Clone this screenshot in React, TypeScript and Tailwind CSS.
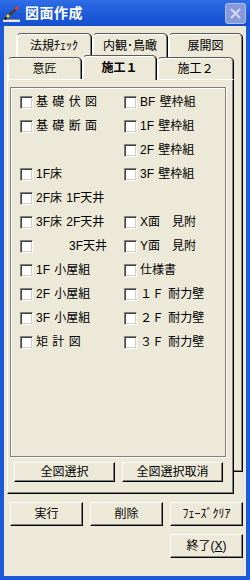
import React from "react";

const FONT = "font-['Liberation_Sans','Noto_Sans_CJK_JP',sans-serif]";

function Check({ label, indent }: { label?: string; indent?: boolean }) {
  if (!label) return <div className="h-[24px]" />;
  return (
    <div className="flex items-center h-[24px]">
      <span className="w-[13px] h-[13px] shrink-0 bg-white border border-t-[#808080] border-l-[#808080] border-b-white border-r-white shadow-[inset_1px_1px_0_#404040,inset_-1px_-1px_0_#d4d0c8]" />
      <span className={`text-[12px] leading-none text-black whitespace-pre [word-spacing:1px] ${indent ? "ml-[36px]" : "ml-[3px]"}`}>{label}</span>
    </div>
  );
}

function Btn({ children, w, h }: { children: React.ReactNode; w: string; h: string }) {
  return (
    <div className={`${w} ${h} flex items-center justify-center bg-[#ece9d8] border border-t-white border-l-white border-r-black border-b-black shadow-[inset_-1px_-1px_0_#808080] text-[12px] leading-none text-black`}>
      {children}
    </div>
  );
}

function BackTab({ label, w }: { label: string; w: string }) {
  return (
    <div className={`${w} h-full flex items-center justify-center rounded-t-[5px] border-t border-l border-r border-t-[#5a5a5a] border-l-white border-r-black shadow-[inset_1px_1px_0_#fff,inset_-1px_0_0_#808080] text-[12px] leading-none`}>
      {label}
    </div>
  );
}

function FrontTab({ label, w, sel }: { label: string; w: string; sel?: boolean }) {
  return (
    <div
      className={`${w} flex items-center justify-center rounded-t-[5px] border-t border-l border-r border-t-[#5a5a5a] border-l-white border-r-black shadow-[inset_1px_1px_0_#fff,inset_-1px_0_0_#808080] text-[12px] leading-none bg-[#ece9d8] ${
        sel ? "h-[25px] -mb-[1px] relative z-10 font-bold" : "h-[22px]"
      }`}
    >
      {label}
    </div>
  );
}

export default function App() {
  return (
    <div className={`w-[250px] h-[580px] bg-[#1d5ad8] flex flex-col ${FONT}`}>
      {/* title bar */}
      <div className="h-[26px] flex items-center bg-gradient-to-b from-[#2f6ee6] via-[#1d5bd9] to-[#1550cf]">
        <svg width="17" height="17" viewBox="0 0 17 17" className="ml-[3px] mt-[2px]">
          <rect x="0" y="13" width="17" height="1" fill="#8a8a8a" />
          <rect x="0" y="14" width="17" height="2" fill="#e8e8e8" />
          <line x1="3" y1="12" x2="14" y2="2" stroke="#404040" strokeWidth="3" />
          <line x1="12.5" y1="3.5" x2="15" y2="1" stroke="#e03a3a" strokeWidth="3" />
          <line x1="4" y1="11" x2="6" y2="9" stroke="#f2c94c" strokeWidth="3" />
          <line x1="1.5" y1="13.5" x2="3" y2="12" stroke="#111" strokeWidth="2" />
        </svg>
        <span className="ml-[5px] text-white font-bold text-[14px] leading-none tracking-[0.5px]">図面作成</span>
        <div className="ml-auto mr-[4px] w-[21px] h-[21px] rounded-[3px] bg-[#8799dd] border border-[#b3c0ee] flex items-center justify-center">
          <svg width="13" height="13" viewBox="0 0 13 13">
            <path d="M2 2 L11 11 M11 2 L2 11" stroke="#d6dcf4" strokeWidth="2" />
          </svg>
        </div>
      </div>

      {/* client area */}
      <div className="flex-1 mx-[4px] mb-[4px] bg-[#ece9d8] flex flex-col">
        {/* tab control: two stacked layers */}
        <div className="grid">
          {/* back layer */}
          <div className="col-start-1 row-start-1 ml-[12px] mt-[7px] w-[227px] flex flex-col">
            <div className="h-[24px] flex">
              <BackTab label="法規ﾁｪｯｸ" w="w-[76px]" />
              <BackTab label="内観･鳥瞰" w="w-[76px]" />
              <BackTab label="展開図" w="w-[75px]" />
            </div>
            <div className="h-[415px] border-r border-b border-black shadow-[inset_-1px_-1px_0_#808080]" />
          </div>

          {/* front layer */}
          <div className="col-start-1 row-start-1 ml-[3px] mt-[31px] w-[227px] flex flex-col">
            <div className="h-[22px] flex items-end">
              <FrontTab label="意匠" w="w-[75px]" />
              <FrontTab label="施工１" w="w-[75px]" sel />
              <FrontTab label="施工２" w="w-[77px]" />
            </div>
            <div className="h-[415px] bg-[#ece9d8] border border-t-white border-l-white border-r-black border-b-black shadow-[inset_-1px_-1px_0_#808080] flex flex-col">
              {/* etched frame */}
              <div className="ml-[2px] mt-[7px] w-[216px] h-[370px] border border-[#808080] shadow-[inset_1px_1px_0_#fff,1px_1px_0_#fff] pt-[2px] pl-[9px]">
                <div className="grid grid-cols-[104px_1fr]">
                  <Check label="基 礎 伏 図" />
                  <Check label="BF 壁枠組" />
                  <Check label="基 礎 断 面" />
                  <Check label="1F 壁枠組" />
                  <Check />
                  <Check label="2F 壁枠組" />
                  <Check label="1F床" />
                  <Check label="3F 壁枠組" />
                  <Check label="2F床 1F天井" />
                  <Check />
                  <Check label="3F床 2F天井" />
                  <Check label="X面　見附" />
                  <Check label="3F天井" indent />
                  <Check label="Y面　見附" />
                  <Check label="1F 小屋組" />
                  <Check label="仕様書" />
                  <Check label="2F 小屋組" />
                  <Check label="１Ｆ 耐力壁" />
                  <Check label="3F 小屋組" />
                  <Check label="２Ｆ 耐力壁" />
                  <Check label="矩 計 図" />
                  <Check label="３Ｆ 耐力壁" />
                </div>
              </div>
              <div className="mt-[5px] ml-[6px] flex gap-[7px]">
                <Btn w="w-[101px]" h="h-[20px]">全図選択</Btn>
                <Btn w="w-[101px]" h="h-[20px]">全図選択取消</Btn>
              </div>
            </div>
          </div>
        </div>

        {/* bottom buttons */}
        <div className="mt-[8px] ml-[6px] flex gap-[7px]">
          <Btn w="w-[73px]" h="h-[24px]">実行</Btn>
          <Btn w="w-[73px]" h="h-[24px]">削除</Btn>
          <Btn w="w-[73px]" h="h-[24px]">ﾌｪｰｽﾞｸﾘｱ</Btn>
        </div>
        <div className="mt-[8px] ml-[166px] flex">
          <Btn w="w-[73px]" h="h-[24px]">
            <span>終了(<span className="underline">X</span>)</span>
          </Btn>
        </div>
      </div>
    </div>
  );
}
